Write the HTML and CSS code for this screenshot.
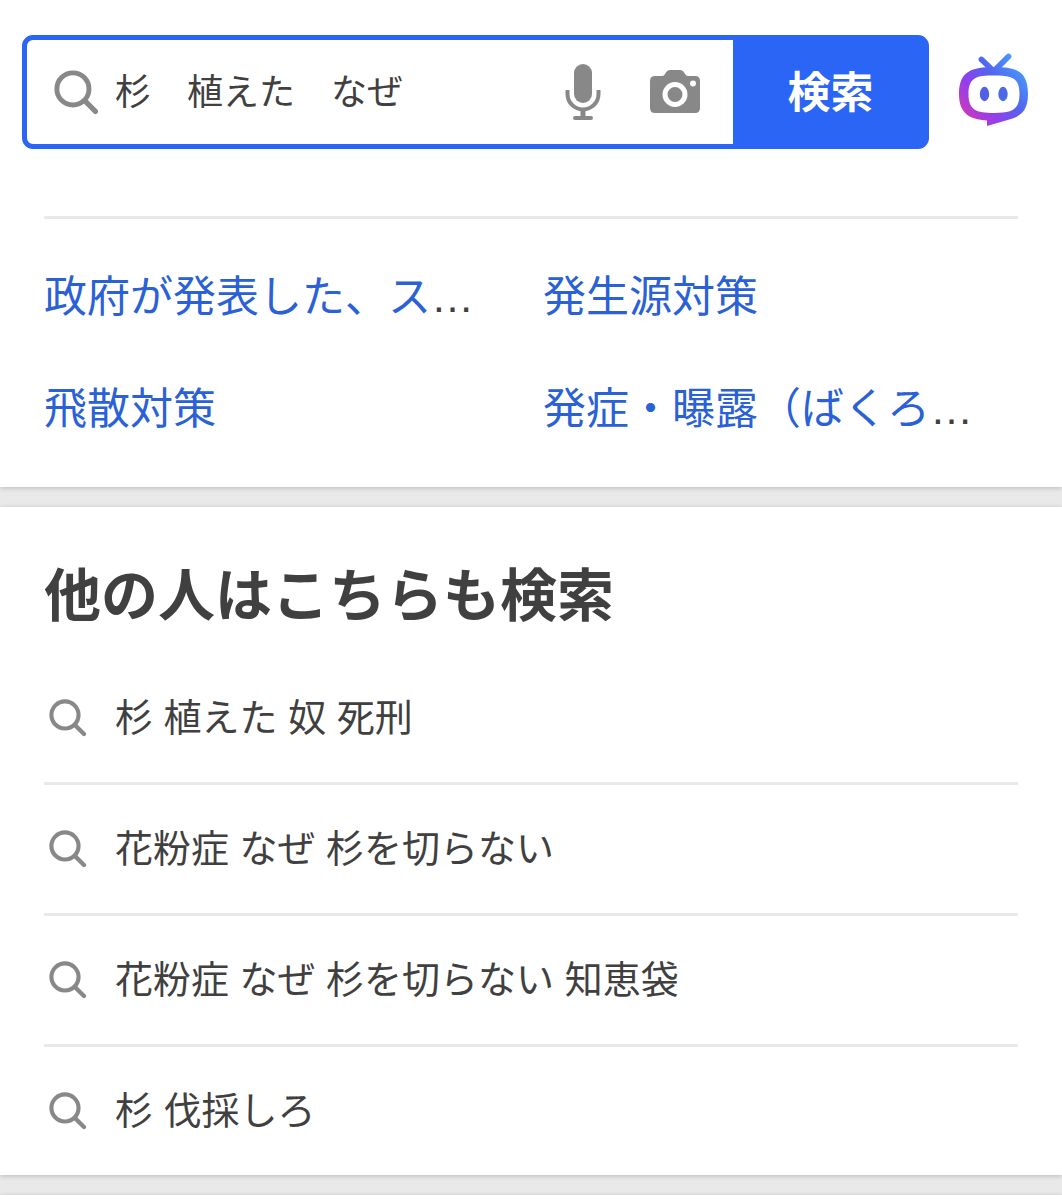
FILE: index.html
```
<!DOCTYPE html>
<html lang="ja">
<head>
    <meta charset="UTF-8">
    <meta name="viewport" content="width=device-width, initial-scale=1.0">
    <title>杉　植えた　なぜ - 検索</title>
    <link rel="stylesheet" href="styles.css">
</head>
<body>
    <!-- Icon shared by the search box and the related searches -->
    <svg class="sprite" aria-hidden="true">
        <symbol id="icon-search" viewBox="0 0 44 44">
            <circle cx="18.500" cy="18.500" r="15.700" fill="none" stroke="currentColor" stroke-width="4.800"/>
            <path d="M30 30 L40.500 40.500" fill="none" stroke="currentColor" stroke-width="5" stroke-linecap="round"/>
        </symbol>
    </svg>

    <header class="header">
        <form class="search" role="search">
            <label class="search-label" for="q" aria-label="検索キーワード">
                <svg class="search-icon"><use href="#icon-search"/></svg>
            </label>
            <input class="search-input" id="q" type="text" name="q" value="杉　植えた　なぜ">
            <button class="tool" type="button" aria-label="音声検索">
                <svg class="mic" viewBox="0 0 36 58">
                    <rect x="9" y="1" width="18" height="39" rx="9" fill="currentColor"/>
                    <path d="M2.500 27 V31 A15.500 15.500 0 0 0 33.500 31 V27" fill="none" stroke="currentColor" stroke-width="4"/>
                    <path d="M18 46 V54" stroke="currentColor" stroke-width="5"/>
                    <path d="M10 55 H26" stroke="currentColor" stroke-width="4" stroke-linecap="round"/>
                </svg>
            </button>
            <button class="tool" type="button" aria-label="画像検索">
                <svg class="camera" viewBox="0 0 50 44">
                    <path d="M5 6 H12 Q14 6 15 4 Q17 0 20 0 H30 Q33 0 35 4 Q36 6 38 6 H45 Q50 6 50 11 V38 Q50 43 45 43 H5 Q0 43 0 38 V11 Q0 6 5 6 Z" fill="currentColor"/>
                    <circle cx="25" cy="24.500" r="10" fill="currentColor" stroke="#fff" stroke-width="5"/>
                    <circle cx="43" cy="13.500" r="3" fill="#fff"/>
                </svg>
            </button>
            <button class="submit" type="submit">検索</button>
        </form>
        <a class="assistant" href="#" aria-label="AIアシスタント">
            <svg class="robot" viewBox="0 0 70 74">
                <defs>
                    <linearGradient id="robot-fill" gradientUnits="userSpaceOnUse" x1="8" y1="62" x2="62" y2="18">
                        <stop offset="0" stop-color="#c53ac2"/>
                        <stop offset="0.3" stop-color="#923eed"/>
                        <stop offset="0.65" stop-color="#5265ee"/>
                        <stop offset="1" stop-color="#4a94fa"/>
                    </linearGradient>
                </defs>
                <path d="M22.500 6.500 L34 17.500 M49.500 3.500 L35 18" fill="none" stroke="url(#robot-fill)" stroke-width="5.800" stroke-linecap="round"/>
                <path fill="url(#robot-fill)" fill-rule="evenodd" d="M35 14 C57 14 69 18 69 41 C69 57 62 63 52 66 L28 73 V67.500 C10 66.500 0 60 0 41 C0 18 13 14 35 14 Z M35 22.500 C18 22.500 9.500 24 9.500 41 C9.500 57 17 60 35 60 C53 60 60.500 57 60.500 41 C60.500 24 52 22.500 35 22.500 Z"/>
                <ellipse cx="25.500" cy="41" rx="4.700" ry="7.200" fill="#5260e4"/>
                <ellipse cx="44" cy="41" rx="4.700" ry="7.200" fill="#4c6ae8"/>
            </svg>
        </a>
    </header>

    <main>
        <section class="card">
            <ul class="links">
                <li class="links-item"><a href="#">政府が発表した、ス</a>…</li>
                <li class="links-item"><a href="#">発生源対策</a></li>
                <li class="links-item"><a href="#">飛散対策</a></li>
                <li class="links-item"><a href="#">発症・曝露（ばくろ</a>…</li>
            </ul>
        </section>

        <section class="card">
            <h2 class="title">他の人はこちらも検索</h2>
            <ul class="related">
                <li class="related-item">
                    <a class="related-link" href="#"><svg class="related-icon"><use href="#icon-search"/></svg>杉 植えた 奴 死刑</a>
                </li>
                <li class="related-item">
                    <a class="related-link" href="#"><svg class="related-icon"><use href="#icon-search"/></svg>花粉症 なぜ 杉を切らない</a>
                </li>
                <li class="related-item">
                    <a class="related-link" href="#"><svg class="related-icon"><use href="#icon-search"/></svg>花粉症 なぜ 杉を切らない 知恵袋</a>
                </li>
                <li class="related-item">
                    <a class="related-link" href="#"><svg class="related-icon"><use href="#icon-search"/></svg>杉 伐採しろ</a>
                </li>
            </ul>
        </section>

        <section class="card"></section>
    </main>
</body>
</html>
```

FILE: styles.css
```
* {
    box-sizing: border-box;
}

body {
    margin: 0;
    background: #fff;
    color: #404040;
    font-family: "Liberation Sans", "Noto Sans CJK JP", sans-serif;
}

ul {
    margin: 0;
    padding: 0;
    list-style: none;
}

a {
    color: #2a61d6;
    text-decoration: none;
}

svg {
    display: block;
}

.sprite {
    display: none;
}

/* Header with the search box */
.header {
    display: flex;
    align-items: center;
    gap: 30px;
    padding: 35px 33px 67px 22px;
}

.search {
    flex: 1;
    min-width: 0;
    display: flex;
    align-items: stretch;
    height: 114px;
    border: 5px solid #2b65f6;
    border-radius: 11px;
    background: #fff;
}

.search-label {
    display: flex;
    align-items: center;
    padding: 0 16px 0 27px;
    color: #888;
}

.search-icon {
    width: 45px;
    height: 45px;
}

.search-input {
    flex: 1;
    min-width: 0;
    padding: 0 0 6px;
    border: 0;
    outline: 0;
    background: none;
    color: #404040;
    font-family: inherit;
    font-size: 36px;
}

.tool {
    display: flex;
    align-items: center;
    justify-content: center;
    width: 92px;
    padding: 0;
    border: 0;
    background: none;
    color: #888;
}

.tool + .submit {
    margin-left: 12px;
}

.mic {
    width: 36px;
    height: 58px;
}

.camera {
    width: 50px;
    height: 44px;
}

.submit {
    width: 191px;
    padding: 0 0 6px 4px;
    border: 0;
    background: #2b65f6;
    color: #fff;
    font-family: inherit;
    font-size: 43px;
    font-weight: bold;
}

.assistant {
    padding-bottom: 4px;
}

.robot {
    width: 70px;
    height: 74px;
}

/* Stacked result cards on grey */
main {
    background: #e9e9e9;
}

.card {
    padding: 0 44px;
    background: #fff;
    box-shadow: 0 1px 5px rgba(0, 0, 0, 0.2);
}

.card + .card {
    margin-top: 20px;
}

.card:first-child {
    padding-bottom: 22px;
    clip-path: inset(0 0 -8px 0); /* keep the shadow off the header */
}

.card:last-child {
    height: 5px;
}

.links {
    display: grid;
    grid-template-columns: 1fr 1fr;
    gap: 0 24px;
    padding-top: 22px;
    border-top: 3px solid #e9e9e9;
}

.links-item {
    white-space: nowrap;
    font-size: 43px;
    line-height: 112px;
}

.title {
    margin: 0;
    padding: 53px 0 22px;
    font-size: 57px;
    font-weight: bold;
    line-height: 72px;
}

.related-item + .related-item {
    border-top: 3px solid #e9e9e9;
}

.related-link {
    display: flex;
    align-items: center;
    gap: 28px;
    padding-left: 5px;
    color: #404040;
    font-size: 38px;
    line-height: 128px;
}

.related-icon {
    width: 38px;
    height: 38px;
    color: #888;
}
```
